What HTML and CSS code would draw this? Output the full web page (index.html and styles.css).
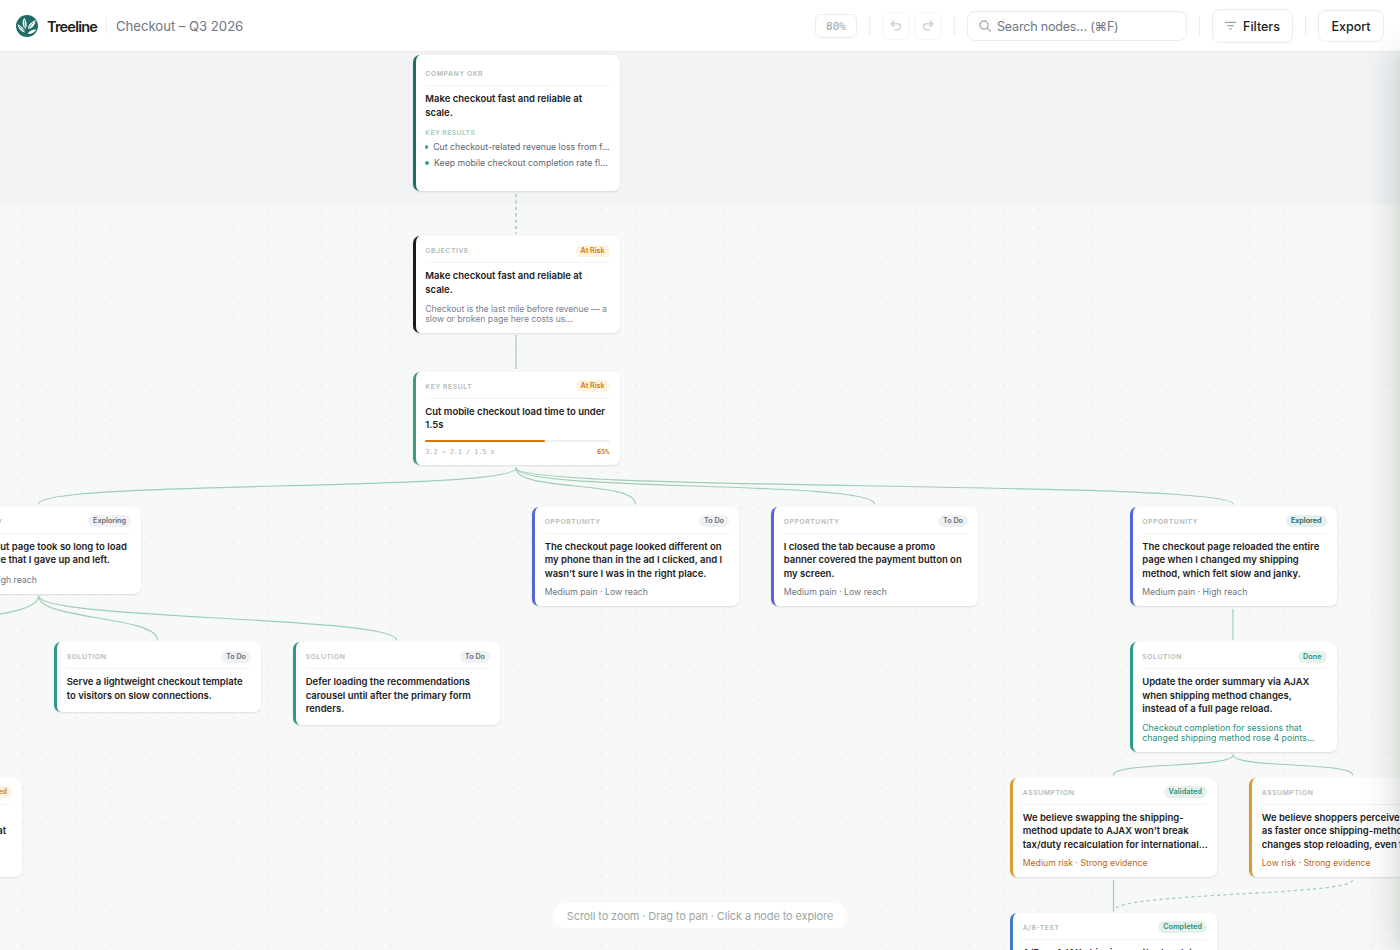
FILE: index.html
```
<!DOCTYPE html>
<html lang="en">
<head>
  <meta charset="UTF-8">
  <title>Treeline</title>
  <link rel="stylesheet" href="styles.css">
</head>
<body>

  <header class="topbar">
    <div class="brand">
      <svg class="logo" viewBox="0 0 22 22">
        <circle cx="11" cy="11" r="11" fill="#1f6b66"/>
        <g fill="#fff">
          <path d="M9.600 14.500C6.200 11 5.600 7 8.300 2.800c2.700 4 3 7.500 1.300 11.700z"/>
          <path d="M9.300 17.800C5.500 17 2.500 14.200 1.600 9.300c3.800 1.700 6.700 4.200 7.700 8.500z"/>
          <path d="M12 14.500C11.600 10.500 14.200 7.500 19.600 5c-.3 4.500-2.600 8-7.600 9.500z"/>
          <path d="M11.600 18.900c1.500-3 4.500-4.600 8.700-4.500-1.500 2.800-4.200 4.600-8.700 4.500z"/>
        </g>
        <path d="M8.500 5.500c-.2 5 .6 9 2.300 15.500M3.500 11.500c2.800 2 5 4.500 6.500 7.800M18 6.800c-4 3.500-6.500 7.500-7 13" fill="none" stroke="#1f6b66" stroke-width=".7"/>
      </svg>
      <span class="brand-name">Treeline</span>
      <span class="sep brand-sep"></span>
      <span class="doc-name">Checkout – Q3 2026</span>
    </div>
    <div class="tools">
      <span class="zoom">80%</span>
      <span class="sep"></span>
      <div class="history">
        <button class="icon-btn"><svg viewBox="0 0 12 12"><path d="M3.800 1.200 1.200 3.800l2.600 2.600M1.200 3.800h6.200a3 3 0 0 1 0 6H5"/></svg></button>
        <button class="icon-btn"><svg viewBox="0 0 12 12"><path d="m8.200 1.200 2.600 2.600-2.600 2.600M10.800 3.800H4.600a3 3 0 0 0 0 6H7"/></svg></button>
      </div>
      <span class="sep"></span>
      <div class="search">
        <svg viewBox="0 0 12 12"><circle cx="5" cy="5" r="4.100"/><path d="m8.100 8.100 3.300 3.300"/></svg>
        <span>Search nodes… (⌘F)</span>
      </div>
      <span class="sep"></span>
      <button class="btn filters"><svg viewBox="0 0 12 10"><path d="M.5 1h11M3 4.600h6M5.200 8.200h1.600"/></svg><span>Filters</span></button>
      <span class="sep"></span>
      <button class="btn export">Export</button>
    </div>
  </header>

  <main class="canvas">
    <div class="okr-band"></div>
    <div class="dots"></div>

    <svg class="links" viewBox="0 0 1400 950">
      <path class="dashed v" d="M516 194V234"/>
      <path class="v" d="M516 335V369M1233 609V640"/>
      <path d="M516 468C516 492 38.500 480 38.500 504"/>
      <path d="M516 468C516 492 635.500 480 635.500 504"/>
      <path d="M516 468C516 492 874.500 480 874.500 504"/>
      <path d="M516 468C516 492 1233 480 1233 504"/>
      <path d="M38.500 596C38.500 620 -81 616 -81 640"/>
      <path d="M38.500 596C38.500 620 157.500 616 157.500 640"/>
      <path d="M38.500 596C38.500 620 396.500 616 396.500 640"/>
      <path d="M1233 755C1233 768 1113.500 762 1113.500 775"/>
      <path d="M1233 755C1233 768 1352.500 762 1352.500 775"/>
      <path d="M1113.500 880V911"/>
      <path class="dashed" d="M1352.500 880C1352.500 896 1113.500 892 1113.500 911"/>
    </svg>

    <article class="card okr c-okr">
      <div class="card-head"><span class="kind">Company OKR</span></div>
      <h3>Make checkout fast and reliable at<br>scale.</h3>
      <div class="kr-label">Key results</div>
      <ul>
        <li>Cut checkout-related revenue loss from f…</li>
        <li>Keep mobile checkout completion rate fl…</li>
      </ul>
    </article>

    <article class="card objective c-objective">
      <div class="card-head"><span class="kind">Objective</span><span class="pill amber">At Risk</span></div>
      <h3>Make checkout fast and reliable at<br>scale.</h3>
      <p class="desc">Checkout is the last mile before revenue — a<br>slow or broken page here costs us…</p>
    </article>

    <article class="card key-result c-kr">
      <div class="card-head"><span class="kind">Key result</span><span class="pill amber">At Risk</span></div>
      <h3>Cut mobile checkout load time to under<br>1.5s</h3>
      <div class="bar"><div class="bar-fill" style="width: 65%"></div></div>
      <div class="metric"><span>3.2 → 2.1 / 1.5 s</span><b>65%</b></div>
    </article>

    <article class="card opportunity c-opp1">
      <div class="card-head"><span class="kind">Opportunity</span><span class="pill">Exploring</span></div>
      <h3>The checkout page took so long to load<br>on my phone that I gave up and left.</h3>
      <p class="meta">High pain · High reach</p>
    </article>

    <article class="card opportunity c-opp2">
      <div class="card-head"><span class="kind">Opportunity</span><span class="pill">To Do</span></div>
      <h3>The checkout page looked different on<br>my phone than in the ad I clicked, and I<br>wasn't sure I was in the right place.</h3>
      <p class="meta">Medium pain · Low reach</p>
    </article>

    <article class="card opportunity c-opp3">
      <div class="card-head"><span class="kind">Opportunity</span><span class="pill">To Do</span></div>
      <h3>I closed the tab because a promo<br>banner covered the payment button on<br>my screen.</h3>
      <p class="meta">Medium pain · Low reach</p>
    </article>

    <article class="card opportunity c-opp4">
      <div class="card-head"><span class="kind">Opportunity</span><span class="pill deep">Explored</span></div>
      <h3>The checkout page reloaded the entire<br>page when I changed my shipping<br>method, which felt slow and janky.</h3>
      <p class="meta">Medium pain · High reach</p>
    </article>

    <article class="card solution c-sol1">
      <div class="card-head"><span class="kind">Solution</span><span class="pill">To Do</span></div>
      <h3>Serve a lightweight checkout template<br>to visitors on slow connections.</h3>
    </article>

    <article class="card solution c-sol2">
      <div class="card-head"><span class="kind">Solution</span><span class="pill">To Do</span></div>
      <h3>Defer loading the recommendations<br>carousel until after the primary form<br>renders.</h3>
    </article>

    <article class="card solution c-sol3">
      <div class="card-head"><span class="kind">Solution</span><span class="pill green">Done</span></div>
      <h3>Update the order summary via AJAX<br>when shipping method changes,<br>instead of a full page reload.</h3>
      <p class="desc result">Checkout completion for sessions that<br>changed shipping method rose 4 points…</p>
    </article>

    <article class="card assumption c-as0">
      <div class="card-head"><span class="kind">Assumption</span><span class="pill amber">Invalidated</span></div>
      <h3><span>We believe shoppers</span><br>on slow connections will wait at</h3>
    </article>

    <article class="card assumption c-as1">
      <div class="card-head"><span class="kind">Assumption</span><span class="pill green">Validated</span></div>
      <h3>We believe swapping the shipping-<br>method update to AJAX won't break<br>tax/duty recalculation for international…</h3>
      <p class="meta risk">Medium risk · Strong evidence</p>
    </article>

    <article class="card assumption c-as2">
      <div class="card-head"><span class="kind">Assumption</span></div>
      <h3>We believe shoppers perceive it<br>as faster once shipping-method<br>changes stop reloading, even the</h3>
      <p class="meta risk">Low risk · Strong evidence</p>
    </article>

    <article class="card test c-ab">
      <div class="card-head"><span class="kind">A/B-test</span><span class="pill green">Completed</span></div>
      <h3>A/B on AJAX shipping-method updat</h3>
    </article>

    <div class="hint">Scroll to zoom · Drag to pan · Click a node to explore</div>
  </main>

  <aside class="drawer-edge"></aside>

</body>
</html>
```
FILE: styles.css
```
* {
  box-sizing: border-box;
}

html {
  overflow: hidden;
}

body {
  position: relative;
  margin: 0;
  width: 1400px;
  height: 950px;
  overflow: hidden;
  display: flex;
  flex-direction: column;
  background: #f7f9f7;
  font-family: Inter, "Liberation Sans", sans-serif;
  color: #1c1c1c;
}

/* top bar */
.topbar {
  height: 52px;
  flex: none;
  padding: 0 16px;
  display: flex;
  justify-content: space-between;
  align-items: center;
  background: #fff;
  border-bottom: 1px solid #ebecec;
}

.brand,
.tools,
.history {
  display: flex;
  align-items: center;
}

.logo {
  width: 22px;
  height: 22px;
  margin-right: 9px;
}

.brand-name {
  width: 50px;
  padding-top: 1px;
  font-size: 14.500px;
  font-weight: 600;
  letter-spacing: -0.8px;
}

.sep {
  width: 1px;
  height: 20px;
  background: #ebedec;
}

.brand-sep {
  height: 16px;
  margin: 0 9px;
}

.doc-name {
  padding-top: 1px;
  font-size: 13.200px;
  letter-spacing: -0.05px;
  color: #6f7683;
}

.tools {
  gap: 12px;
}

.zoom {
  width: 42px;
  height: 24px;
  border: 1px solid #ebedec;
  border-radius: 6px;
  font: 11px/23px "DejaVu Sans Mono", monospace;
  text-align: center;
  color: #9da5a1;
}

.history {
  gap: 4px;
}

button {
  display: flex;
  align-items: center;
  justify-content: center;
  padding: 0;
  background: #fff;
  border: 1px solid #ebedec;
  border-radius: 8px;
  font-family: inherit;
}

svg path,
svg circle {
  stroke-linecap: round;
  stroke-linejoin: round;
}

.icon-btn {
  width: 28px;
  height: 28px;
  border-color: #f4f5f4;
}

.icon-btn svg {
  width: 12px;
  height: 12px;
  fill: none;
  stroke: #cbd6d1;
  stroke-width: 1.5;
}

.search {
  width: 220px;
  height: 30px;
  padding: 0 11px;
  display: flex;
  align-items: center;
  gap: 6px;
  border: 1px solid #ebedec;
  border-radius: 8px;
  font-size: 12.500px;
  letter-spacing: -0.18px;
  color: #6f7683;
  white-space: nowrap;
}

.search span,
.btn {
  padding-top: 1px;
}

.search svg {
  width: 12px;
  height: 12px;
  fill: none;
  stroke: #9aa29e;
  stroke-width: 1.2;
}

.btn {
  height: 32px;
  font-size: 12.500px;
  font-weight: 500;
  color: #1c1c1c;
}

.filters {
  width: 81px;
  height: 34px;
  gap: 7px;
}

.filters svg {
  width: 11px;
  height: 10px;
  fill: none;
  stroke: #9aa29e;
  stroke-width: 1.3;
}

.export {
  width: 66px;
}

/* canvas */
.canvas {
  flex: 1;
  position: relative;
  overflow: hidden;
}

.okr-band {
  height: 153px;
  background: #f1f3f5;
}

.dots {
  position: absolute;
  inset: 0;
  background-image: radial-gradient(circle, #e6ebe8 0.6px, transparent 0.9px);
  background-size: 17.520px 17.520px;
  background-position: -3.200px -8.500px;
}

.links {
  position: absolute;
  left: 0;
  top: -52px;
  width: 1400px;
  height: 950px;
  fill: none;
  stroke: #9fcdb9;
  stroke-width: 1.2;
}

.links .v {
  stroke: #c3dfd2;
  stroke-width: 2;
  stroke-linecap: butt;
}

.links .dashed {
  stroke-dasharray: 3.200 3.200;
  stroke-linecap: butt;
}

.links .dashed.v {
  stroke: #b4d8c8;
}

/* tree nodes */
.card {
  position: absolute;
  width: 207px;
  padding: 8px 10px 0 9.700px;
  background: #fff;
  border-left: 3px solid #ccc;
  border-radius: 7px;
  box-shadow: 0 1px 2px rgba(20, 40, 30, 0.12);
  white-space: nowrap;
}

.c-okr { left: 412.600px; top: 3px; height: 136px; }
.c-objective { left: 412.600px; top: 184.400px; height: 96.600px; }
.c-kr { left: 412.600px; top: 320px; height: 93px; }
.c-opp1 { left: -66px; top: 455px; height: 87px; }
.c-opp2 { left: 532px; top: 455px; height: 99px; }
.c-opp3 { left: 771px; top: 455px; height: 99px; }
.c-opp4 { left: 1129.500px; top: 455px; height: 99px; }
.c-sol1 { left: 54px; top: 590.400px; height: 69.500px; }
.c-sol2 { left: 293px; top: 590.400px; height: 82.600px; }
.c-sol3 { left: 1129.500px; top: 590.400px; height: 109.600px; }
.c-as0 { left: -185px; top: 726px; height: 99px; }
.c-as1 { left: 1010px; top: 726px; height: 99px; }
.c-as2 { left: 1249px; top: 726px; height: 99px; }
.c-ab { left: 1010px; top: 861px; height: 99px; }

.okr { border-left-color: #1f6f66; padding-top: 12px; }
.objective { border-left-color: #1c1c1c; }
.key-result { border-left-color: #3f9c7c; }
.opportunity { border-left-color: #5566d6; }
.solution { border-left-color: #2f978f; }
.assumption { border-left-color: #dc9c2d; }
.test { border-left-color: #447bc8; }

.card-head {
  height: 18.600px;
  padding-bottom: 5px;
  display: flex;
  align-items: center;
  justify-content: space-between;
  border-bottom: 1px solid #f3f4f4;
}

.okr .card-head {
  height: 19px;
}

.kind {
  font-size: 6.800px;
  font-weight: 600;
  letter-spacing: 0.58px;
  text-transform: uppercase;
  color: #b3bab7;
}

.pill {
  height: 12px;
  padding: 0 5px;
  border-radius: 6px;
  background: #f0f1f3;
  color: #666c78;
  font-size: 7.200px;
  font-weight: 600;
  line-height: 12.500px;
}

.pill.amber { background: #fdf3df; color: #d37a10; }
.pill.green { background: #e5f1ed; color: #23917a; letter-spacing: 0.1px; }
.pill.deep { background: #e5f1ed; color: #1f615c; }

h3 {
  margin: 6.300px 0 0;
  font-size: 9.500px;
  font-weight: 600;
  line-height: 13.500px;
}

.desc {
  margin: 7.300px 0 0;
  font-size: 8.700px;
  line-height: 10.300px;
  letter-spacing: -0.04px;
  color: #7b8290;
}

.desc.result {
  margin-top: 7px;
  letter-spacing: 0.05px;
  color: #23917a;
}

.meta {
  margin: 5.600px 0 0;
  font-size: 8.700px;
  line-height: 13px;
  color: #6f7683;
}

.c-opp1 .meta {
  margin-top: 7px;
  margin-left: -1px;
}

/* scrolled half out of view */
.c-as0 h3 {
  text-align: right;
  padding-right: 6px;
}

.c-as0 h3 span {
  padding-right: 24px;
}

.meta.risk {
  color: #b8661c;
}

.kr-label {
  margin-top: 8.500px;
  font-size: 6.800px;
  font-weight: 600;
  line-height: 10px;
  letter-spacing: 0.4px;
  text-transform: uppercase;
  color: #9bcdb5;
}

ul {
  list-style: none;
  margin: 1px 0 0;
  padding: 0;
}

li {
  display: flex;
  align-items: center;
  gap: 4.800px;
  height: 16px;
  font-size: 8.700px;
  letter-spacing: 0.02px;
  color: #5c6470;
}

li::before {
  content: "";
  width: 4px;
  height: 4px;
  border-radius: 50%;
  background: #3f9c7c;
}

.bar {
  height: 2px;
  margin-top: 8px;
  border-radius: 1px;
  background: #f1f3f3;
}

.bar-fill {
  height: 2px;
  border-radius: 1px;
  background: #d9770c;
}

.metric {
  margin-top: 5px;
  display: flex;
  justify-content: space-between;
  font: 7px/10px "DejaVu Sans Mono", monospace;
  letter-spacing: -0.15px;
  color: #aab2ae;
}

.metric b {
  color: #d37a10;
  letter-spacing: 0;
}

.hint {
  position: absolute;
  left: 553px;
  top: 851px;
  width: 294px;
  height: 25px;
  border-radius: 13px;
  background: #fff;
  font-size: 11px;
  line-height: 26px;
  letter-spacing: -0.12px;
  text-align: center;
  color: #9da5a1;
}

/* closed side panel, only its shadow reaches the canvas */
.drawer-edge {
  position: absolute;
  right: -40px;
  top: 52px;
  width: 40px;
  height: 898px;
  box-shadow: -8px 0 32px rgba(20, 40, 30, 0.14), -2px 0 8px rgba(20, 40, 30, 0.04);
}
```
